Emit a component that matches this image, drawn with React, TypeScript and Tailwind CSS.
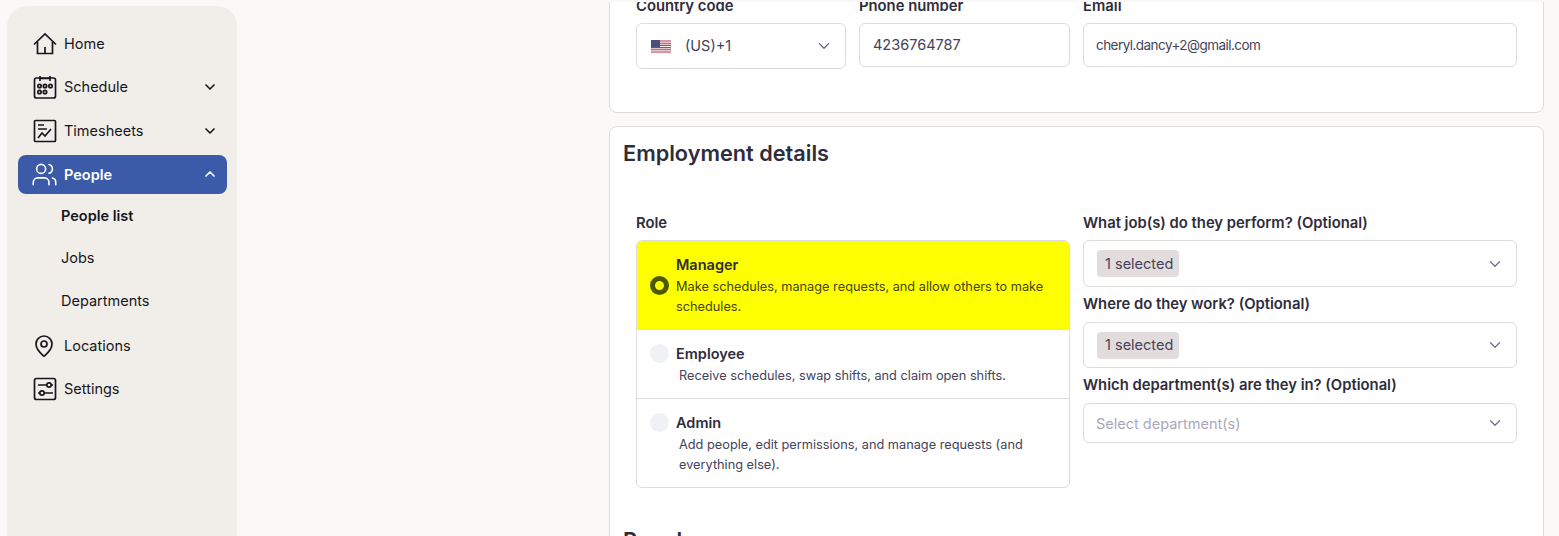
import { ChevronDown, ChevronUp, MapPin, Users } from 'lucide-react'

function HomeIcon() {
  return (
    <svg width="24" height="24" viewBox="0 0 24 24" fill="none" stroke="currentColor" strokeWidth="1.7">
      <path d="M1 12.5 12 2l11 10.5" />
      <path d="M4.5 10v11.5h15V10" />
      <path d="M12 15v6.5" />
    </svg>
  )
}

function ScheduleIcon() {
  return (
    <svg width="24" height="24" viewBox="0 0 24 24" fill="none" stroke="currentColor" strokeWidth="1.7">
      <rect x="1.5" y="3" width="21" height="20" rx="2" />
      <path d="M7 1v5M17 1v5M7 3.5h10" />
      <circle cx="6.5" cy="11" r="1.7" />
      <circle cx="12" cy="11" r="1.7" />
      <circle cx="17.5" cy="11" r="1.7" />
      <circle cx="6.5" cy="17" r="1.7" />
      <circle cx="12" cy="17" r="1.7" />
    </svg>
  )
}

function TimesheetIcon() {
  return (
    <svg width="24" height="24" viewBox="0 0 24 24" fill="none" stroke="currentColor" strokeWidth="1.7">
      <rect x="1.5" y="1.5" width="21" height="21" rx="1" />
      <path d="M5 6h6M5 10h9M5 19l4-5 3 3 6-7" />
    </svg>
  )
}

function SettingsIcon() {
  return (
    <svg width="24" height="24" viewBox="0 0 24 24" fill="none" stroke="currentColor" strokeWidth="1.7">
      <rect x="1.5" y="1.5" width="21" height="21" rx="2" />
      <path d="M5 8h9M18.5 8H20M5 16h2M11 16h9" />
      <circle cx="16" cy="8" r="2.2" />
      <circle cx="9" cy="16" r="2.2" />
    </svg>
  )
}

function UsFlag() {
  return (
    <svg width="20" height="14" viewBox="0 0 20 14" className="mt-[2px]">
      <rect width="20" height="14" fill="#f3eeee" />
      <path d="M0 1h20M0 3.2h20M0 5.4h20M0 7.6h20M0 9.8h20M0 12h20" stroke="#b5475a" strokeWidth="1.1" />
      <rect width="9" height="7.5" fill="#4a4f80" />
    </svg>
  )
}

function NavItem({ icon, label, chevron }: { icon: React.ReactNode; label: string; chevron?: boolean }) {
  return (
    <div className="flex h-[39px] items-center pl-[15px] pr-[9.5px] mb-[4.5px] text-[#16161d]">
      <span className="w-[31px] flex items-center">{icon}</span>
      <span className="text-[14.5px] pt-[0.5px]">{label}</span>
      {chevron && <ChevronDown className="ml-auto h-4 w-4" strokeWidth={2.5} />}
    </div>
  )
}

function Label({ children }: { children: React.ReactNode }) {
  return <p className="text-[14.8px] font-semibold text-[#2f2c3c] leading-[18px]">{children}</p>
}

function MultiSelect({ text, className }: { text: string; className: string }) {
  return (
    <div className={`flex items-center justify-between border border-[#e0dbdb] rounded-md pl-[13px] pr-[12px] ${className}`}>
      <span className="bg-[#e2dcdc] rounded pl-2 pr-[6px] h-[27px] flex items-center text-[14.5px] text-[#45425a]">{text}</span>
      <ChevronDown className="h-[18px] w-[18px] text-[#6f6d82]" strokeWidth={1.6} />
    </div>
  )
}

function RoleOption({ title, desc, active }: { title: string; desc: string; active?: boolean }) {
  return (
    <div className={active ? 'flex items-center pl-[13px] pr-[12px] bg-[#ffff00] h-[88px]' : 'flex items-start pl-[13px] pr-[12px] border-t border-[#e0dee0] pt-[14px]'}>
      {active ? (
        <span className="w-[19px] h-[19px] rounded-full border-[5px] border-[#4a5a00] shrink-0" />
      ) : (
        <span className="w-[19px] h-[19px] rounded-full bg-[#eff1f4] shrink-0" />
      )}
      <div className={active ? 'ml-[7px] pt-[1px]' : 'ml-[7px]'}>
        <p className="text-[14.5px] font-semibold leading-[20px] text-[#2f2c3c]">{title}</p>
        <p className={`text-[12.75px] leading-[20px] mt-[2px] ${active ? 'text-[#45450f]' : 'text-[#45425a] ml-[3px]'}`}>{desc}</p>
      </div>
    </div>
  )
}

export default function App() {
  return (
    <div className="h-[536px] overflow-hidden bg-[#fbf9f7] flex font-['Inter',sans-serif]">
      <aside className="ml-[7px] mt-[6px] w-[230px] shrink-0 h-[600px] bg-[#f1eeea] rounded-[20px] pt-[18px] pl-[11px] pr-[10px]">
        <NavItem icon={<HomeIcon />} label="Home" />
        <NavItem icon={<ScheduleIcon />} label="Schedule" chevron />
        <NavItem icon={<TimesheetIcon />} label="Timesheets" chevron />
        <div className="flex h-[39px] items-center pl-[15px] pr-[9.5px] bg-[#3b5ba9] rounded-lg text-white font-semibold">
          <span className="w-[31px] flex items-center"><Users className="-ml-[2px] h-[27px] w-[27px] shrink-0" strokeWidth={1.4} /></span>
          <span className="text-[14.5px] pt-[1px]">People</span>
          <ChevronUp className="ml-auto h-4 w-4" strokeWidth={2.5} />
        </div>
        <div className="pl-[43px] text-[14.5px] text-[#16161d]">
          <div className="h-[42px] pt-[11px] font-semibold">People list</div>
          <div className="h-[42px] pt-[11px]">Jobs</div>
          <div className="h-[42px] pt-[12px]">Departments</div>
        </div>
        <div className="pt-[6.5px]">
          <NavItem icon={<MapPin className="-ml-px h-6 w-6" strokeWidth={1.7} />} label="Locations" />
          <NavItem icon={<SettingsIcon />} label="Settings" />
        </div>
      </aside>

      <main className="relative ml-[372px] w-[935px] shrink-0">
        <div className="absolute -left-px top-0 z-10 h-[2px] w-[937px] bg-[#fbf9f7]" />
        <section className="-mt-[4px] h-[117px] border border-[#e0dbdb] rounded-b-lg bg-white px-[26px] pt-0">
          <div className="flex gap-[13px]">
            <div className="w-[210px]">
              <Label>Country code</Label>
              <div className="mt-[8px] h-[46px] border border-[#e0dbdb] rounded-md flex items-center pl-[14px] pr-[12.5px] text-[14.5px] text-[#45425a]">
                <UsFlag />
                <span className="ml-[14px]">(US)+1</span>
                <ChevronDown className="ml-auto h-[18px] w-[18px] text-[#6f6d82]" strokeWidth={1.6} />
              </div>
            </div>
            <div className="w-[211px]">
              <Label>Phone number</Label>
              <div className="mt-[8px] h-[44px] border border-[#e0dbdb] rounded-md flex items-center pl-[13px] text-[14.5px] text-[#45425a]">4236764787</div>
            </div>
            <div className="w-[434px]">
              <Label>Email</Label>
              <div className="mt-[8px] h-[44px] border border-[#e0dbdb] rounded-md flex items-center pl-[12px] text-[13.5px] tracking-[-0.55px] text-[#45425a]">cheryl.dancy+2@gmail.com</div>
            </div>
          </div>
        </section>

        <section className="mt-[13px] h-[500px] border border-[#e0dbdb] rounded-lg bg-white px-[26px]">
          <h2 className="-ml-[13px] mt-[12px] text-[21.7px] font-semibold leading-[28px] text-[#2f2c3c]">Employment details</h2>
          <div className="mt-[47px] grid grid-cols-[434px_434px] gap-x-[13px]">
            <div>
              <Label>Role</Label>
              <div className="mt-[8px] h-[248px] border border-[#dcdcdc] rounded-md overflow-hidden">
                <RoleOption active title="Manager" desc="Make schedules, manage requests, and allow others to make schedules." />
                <div className="h-[69px]">
                  <RoleOption title="Employee" desc="Receive schedules, swap shifts, and claim open shifts." />
                </div>
                <RoleOption title="Admin" desc="Add people, edit permissions, and manage requests (and everything else)." />
              </div>
            </div>
            <div>
              <Label>What job(s) do they perform? (Optional)</Label>
              <MultiSelect text="1 selected" className="mt-[8px] h-[47px]" />
              <div className="mt-[8px]"><Label>Where do they work? (Optional)</Label></div>
              <MultiSelect text="1 selected" className="mt-[9px] h-[46px]" />
              <div className="mt-[8px]"><Label>Which department(s) are they in? (Optional)</Label></div>
              <div className="mt-[9px] h-[40px] border border-[#e0dbdb] rounded-md flex items-center justify-between pl-[12px] pr-[12px] text-[14.5px] text-[#a9a8ba]">
                <span className="pt-[2px]">Select department(s)</span>
                <ChevronDown className="h-[18px] w-[18px] text-[#6f6d82]" strokeWidth={1.6} />
              </div>
            </div>
          </div>
          <h2 className="-ml-[13px] mt-[38px] text-[21.7px] font-semibold leading-[28px] text-[#2f2c3c]">People</h2>
        </section>
      </main>
    </div>
  )
}
